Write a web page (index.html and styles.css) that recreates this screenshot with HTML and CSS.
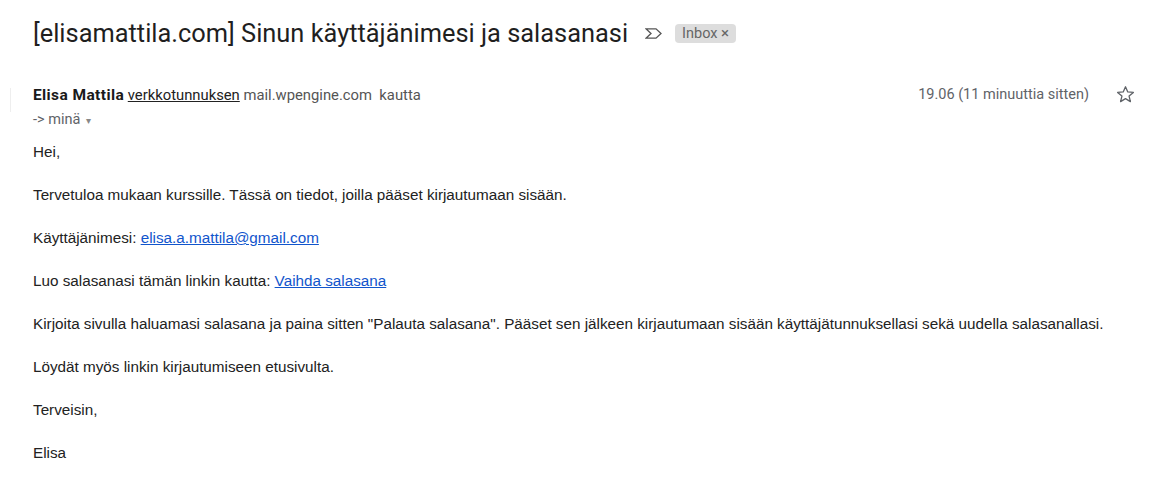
FILE: index.html
```html
<!DOCTYPE html>
<html lang="fi">
  <head>
    <meta charset="utf-8">
    <title>Sinun käyttäjänimesi ja salasanasi</title>
    <link rel="stylesheet" href="styles.css">
  </head>
  <body>

    <div class="subject">
      <h2>[elisamattila.com] Sinun käyttäjänimesi ja salasanasi</h2>
      <svg class="sigma" width="17" height="11" viewBox="0 0 17 11">
        <path d="M1 0.8 H11 L16 5.5 L11 10.2 H1 L6 5.5 Z" fill="none" stroke="#555" stroke-width="1.3" stroke-linejoin="miter"/>
      </svg>
      <span class="label">Inbox <span class="x">×</span></span>
    </div>

    <div class="message">
      <div class="bar"></div>
      <div class="head">
        <div class="from">
          <div class="line1">
            <b>Elisa Mattila</b> <u>verkkotunnuksen</u> <span class="via">mail.wpengine.com&nbsp; kautta</span>
          </div>
          <div class="line2">-&gt; minä <span class="caret">▾</span></div>
        </div>
        <div class="meta">
          <span class="date">19.06 (11 minuuttia sitten)</span>
          <svg class="star" width="21" height="21" viewBox="0 0 24 24">
            <path d="M12 3.2 L14.6 9.1 L21 9.6 L16.1 13.8 L17.6 20.1 L12 16.7 L6.4 20.1 L7.9 13.8 L3 9.6 L9.4 9.1 Z" fill="none" stroke="#5f6368" stroke-width="1.5" stroke-linejoin="round"/>
          </svg>
        </div>
      </div>

      <div class="body">
        <p>Hei,</p>
        <p>Tervetuloa mukaan kurssille. Tässä on tiedot, joilla pääset kirjautumaan sisään.</p>
        <p>Käyttäjänimesi: <a href="#">elisa.a.mattila@gmail.com</a></p>
        <p>Luo salasanasi tämän linkin kautta: <a href="#">Vaihda salasana</a></p>
        <p>Kirjoita sivulla haluamasi salasana ja paina sitten "Palauta salasana". Pääset sen jälkeen kirjautumaan sisään käyttäjätunnuksellasi sekä uudella salasanallasi.</p>
        <p>Löydät myös linkin kirjautumiseen etusivulta.</p>
        <p>Terveisin,</p>
        <p>Elisa</p>
      </div>
    </div>

  </body>
</html>
```

FILE: styles.css
```css
* {
  box-sizing: border-box;
}

body {
  margin: 0;
  background: #fff;
  color: #222;
  font-family: Roboto, "Noto Sans", sans-serif;
}

/* subject line */
.subject {
  display: flex;
  align-items: center;
  padding: 18px 0 0 33px;
  height: 48px;
}
.subject h2 {
  margin: 0;
  font-size: 25.4px;
  line-height: 30px;
  font-weight: 400;
  color: #1f1f1f;
}
.sigma {
  margin-left: 17px;
}
.label {
  margin-left: 13px;
  background: #ddd;
  color: #666;
  font-size: 14.5px;
  line-height: 19px;
  padding: 0 7px;
  border-radius: 4px;
}
.label .x {
  font-size: 15px;
}

/* message */
.message {
  position: relative;
  padding: 38px 0 0 33px;
}
.bar {
  position: absolute;
  left: 10px;
  top: 40px;
  width: 1px;
  height: 24px;
  background: #eee;
}
.head {
  display: flex;
  justify-content: space-between;
}
.line1 {
  font-size: 14.8px;
  line-height: 18px;
  color: #222;
}
.line1 b {
  font-size: 15.5px;
  letter-spacing: 0.4px;
  color: #1a1a1a;
}
.line1 .via {
  color: #555;
}
.line2 {
  margin-top: 7px;
  font-size: 14.5px;
  line-height: 18px;
  color: #5f6368;
}
.caret {
  font-size: 10px;
  color: #888;
  margin-left: 2px;
}
.meta {
  display: flex;
  align-items: flex-start;
  padding-right: 33px;
}
.date {
  font-size: 14.5px;
  line-height: 18px;
  color: #5f6368;
}
.star {
  margin-left: 26px;
  margin-top: -2px;
}

/* mail text */
.body {
  padding-top: 13px;
  font-family: "Liberation Sans", Arial, sans-serif;
  font-size: 15.25px;
  color: #222;
}
.body p {
  margin: 0 0 25px 0;
  line-height: 18px;
}
.body a {
  color: #1155cc;
}
```
